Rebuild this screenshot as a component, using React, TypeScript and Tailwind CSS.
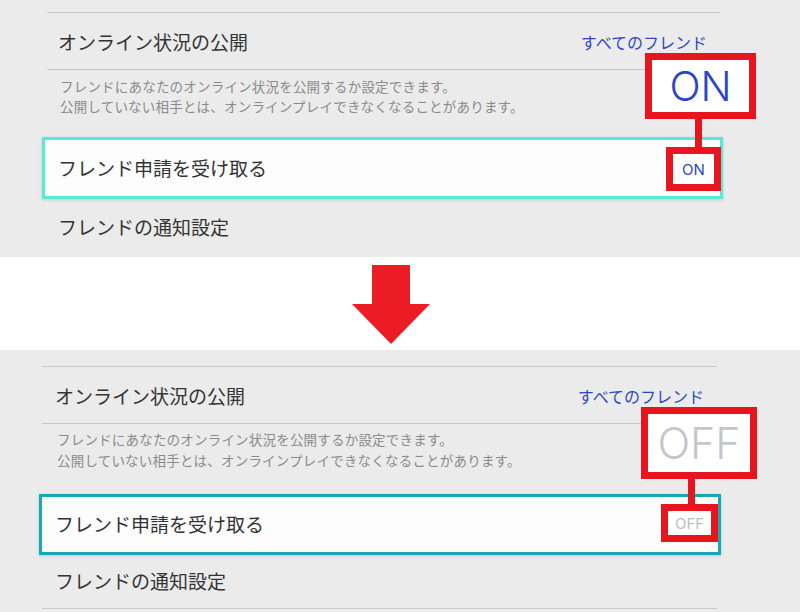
const jp = "font-['Noto_Sans_CJK_JP',sans-serif]";

function SettingsPanel({ on }: { on: boolean }) {
  // the two screenshots were captured at slightly different sizes, so the
  // offsets differ a little between the ON and OFF panels
  return (
    <div className={`relative bg-[#ebebeb] ${on ? 'h-[257px] pt-[12px]' : 'h-[262px] pt-[16px]'}`}>
      <div className={`border-t border-[#c8c8c8] ${on ? 'ml-[47px] w-[673px]' : 'ml-[42px] w-[675px]'}`}>
        <div
          className={`flex h-[57px] items-center justify-between border-b border-[#c8c8c8] pr-[13px] pt-[2px] ${
            on ? 'pl-[11px]' : 'pl-[13px]'
          }`}
        >
          <span className="text-[19px] text-[#333]">オンライン状況の公開</span>
          <span className="text-[16px] text-[#2b48c4]">すべてのフレンド</span>
        </div>
        <div
          className={`text-[13.5px] tracking-[0.2px] text-[#8a8a8a] ${
            on ? 'h-[67px] pl-[13px] pt-[6px] leading-[20px]' : 'h-[70px] pl-[15px] pt-[5px] leading-[21px]'
          }`}
        >
          <p>フレンドにあなたのオンライン状況を公開するか設定できます。</p>
          <p>公開していない相手とは、オンラインプレイできなくなることがあります。</p>
        </div>
      </div>

      <div
        className={`flex items-center border-[3px] bg-[#fdfdfd] pl-[13px] shadow-[0_1px_3px_rgba(0,0,0,0.15)] ${
          on ? 'ml-[42px] h-[62px] w-[681px] border-[#55ecd7]' : 'ml-[39px] h-[61px] w-[682px] border-[#17a9b3]'
        }`}
      >
        <span className="text-[19px] text-[#333]">フレンド申請を受け取る</span>
      </div>

      <div
        className={`flex items-center ${
          on ? 'ml-[47px] h-[57px] w-[673px] pl-[11px]' : 'ml-[42px] h-[54px] w-[675px] border-b border-[#c8c8c8] pl-[13px]'
        }`}
      >
        <span className="text-[19px] text-[#333]">フレンドの通知設定</span>
      </div>

      {/* red call-out: zoomed toggle value */}
      {on ? (
        <>
          <div className="absolute left-[645px] top-[53px] flex h-[66px] w-[111px] items-center justify-center border-[7px] border-[#e8141e] bg-white">
            <span className="font-['Inter',sans-serif] text-[41px] font-light leading-none text-[#2a46c6]">ON</span>
          </div>
          <div className="absolute left-[695px] top-[119px] h-[28px] w-[7px] bg-[#e8141e]" />
          <div className="absolute left-[666px] top-[147px] flex h-[44px] w-[55px] items-center justify-center border-[7px] border-[#e8141e] bg-white">
            <span className="font-['Inter',sans-serif] text-[15px] leading-none text-[#2a46c6]">ON</span>
          </div>
        </>
      ) : (
        <>
          <div className="absolute left-[641px] top-[57px] flex h-[72px] w-[116px] items-center justify-center border-[7px] border-[#e8141e] bg-white">
            <span className="font-['Inter',sans-serif] text-[43px] font-light leading-none text-[#c3c7cc]">OFF</span>
          </div>
          <div className="absolute left-[688px] top-[129px] h-[25px] w-[7px] bg-[#e8141e]" />
          <div className="absolute left-[661px] top-[154px] flex h-[38px] w-[57px] items-center justify-center border-[7px] border-[#e8141e] bg-white">
            <span className="font-['Inter',sans-serif] text-[15px] leading-none text-[#b9bdc2]">OFF</span>
          </div>
        </>
      )}
    </div>
  );
}

export default function App() {
  return (
    <div className={`h-[612px] w-[800px] overflow-hidden bg-white ${jp}`}>
      <SettingsPanel on />
      <div className="flex h-[93px] justify-center pt-[8px]">
        <svg width="78" height="79" viewBox="0 0 78 79" className="ml-[-18px]">
          <polygon points="20,0 58,0 58,39 78,39 39,79 0,39 20,39" fill="#ec1c24" />
        </svg>
      </div>
      <SettingsPanel on={false} />
    </div>
  );
}
